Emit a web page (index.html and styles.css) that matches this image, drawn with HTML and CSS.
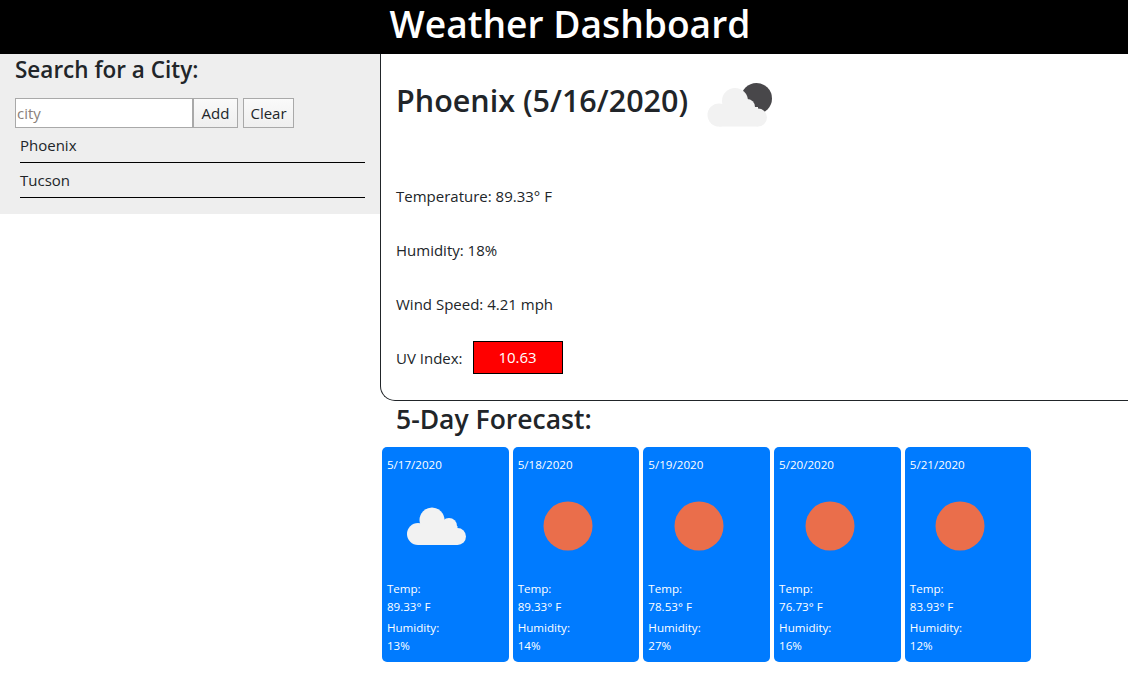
FILE: index.html
```html
<!DOCTYPE html>
<html lang="en">
<head>
  <meta charset="UTF-8">
  <meta name="viewport" content="width=device-width, initial-scale=1.0">
  <title>Weather Dashboard</title>
  <link rel="stylesheet" href="styles.css">
</head>
<body>
  <header class="page-header">
    <h1>Weather Dashboard</h1>
  </header>

  <div class="layout">
    <aside class="sidebar">
      <h4>Search for a City:</h4>
      <div class="search-row">
        <input type="text" class="city-input" placeholder="city">
        <button class="btn">Add</button>
        <button class="btn btn-clear">Clear</button>
      </div>
      <ul class="city-list">
        <li>Phoenix</li>
        <li>Tucson</li>
      </ul>
    </aside>

    <main class="content">
      <section class="current">
        <div class="current-title">
          <h2>Phoenix (5/16/2020)</h2>
          <svg class="icon-large" viewBox="0 0 100 100">
            <circle cx="66.500" cy="47.500" r="15.500" fill="#48474a"/>
            <g fill="#f2f2f2">
              <circle cx="29" cy="64" r="11.500"/>
              <circle cx="45" cy="50" r="13"/>
              <circle cx="57" cy="56" r="8"/>
              <circle cx="68" cy="66.500" r="9"/>
              <rect x="29" y="56" width="39" height="19.500"/>
            </g>
          </svg>
        </div>
        <p>Temperature: 89.33° F</p>
        <p>Humidity: 18%</p>
        <p>Wind Speed: 4.21 mph</p>
        <p class="uv-row">UV Index: <span class="uv-badge">10.63</span></p>
      </section>

      <h3>5-Day Forecast:</h3>
      <div class="forecast">
        <article class="card">
          <div class="card-date">5/17/2020</div>
          <svg class="icon-small" viewBox="0 0 100 100">
            <g fill="#f2f2f2">
              <circle cx="31" cy="58" r="11"/>
              <circle cx="45" cy="44" r="12.500"/>
              <circle cx="62" cy="50" r="8"/>
              <circle cx="70.500" cy="60.500" r="8.500"/>
              <rect x="31" y="50" width="39.500" height="19"/>
            </g>
          </svg>
          <p>Temp:<br>89.33° F</p>
          <p>Humidity:<br>13%</p>
        </article>
        <article class="card">
          <div class="card-date">5/18/2020</div>
          <svg class="icon-small" viewBox="0 0 100 100"><circle cx="50" cy="50" r="24.500" fill="#ea6e4b"/></svg>
          <p>Temp:<br>89.33° F</p>
          <p>Humidity:<br>14%</p>
        </article>
        <article class="card">
          <div class="card-date">5/19/2020</div>
          <svg class="icon-small" viewBox="0 0 100 100"><circle cx="50" cy="50" r="24.500" fill="#ea6e4b"/></svg>
          <p>Temp:<br>78.53° F</p>
          <p>Humidity:<br>27%</p>
        </article>
        <article class="card">
          <div class="card-date">5/20/2020</div>
          <svg class="icon-small" viewBox="0 0 100 100"><circle cx="50" cy="50" r="24.500" fill="#ea6e4b"/></svg>
          <p>Temp:<br>76.73° F</p>
          <p>Humidity:<br>16%</p>
        </article>
        <article class="card">
          <div class="card-date">5/21/2020</div>
          <svg class="icon-small" viewBox="0 0 100 100"><circle cx="50" cy="50" r="24.500" fill="#ea6e4b"/></svg>
          <p>Temp:<br>83.93° F</p>
          <p>Humidity:<br>12%</p>
        </article>
      </div>
    </main>
  </div>
</body>
</html>
```

FILE: styles.css
```css
* {
  box-sizing: border-box;
}
body {
  margin: 0;
  font-family: "Open Sans", "Noto Sans", sans-serif;
  font-size: 15px;
  line-height: 24px;
  color: #212529;
  background: #fff;
}
h1, h2, h3, h4, p, ul {
  margin: 0;
  padding: 0;
}
.page-header {
  height: 54px;
  background: #000;
  color: #fff;
  text-align: center;
  padding-left: 12px;
}
.page-header h1 {
  font-size: 37.200px;
  font-weight: 600;
  line-height: 48px;
}
.layout {
  display: flex;
  align-items: flex-start;
}
.sidebar {
  width: 380px;
  height: 160px;
  flex-shrink: 0;
  background: #eee;
  padding: 0 15px;
}
.sidebar h4 {
  font-size: 22.500px;
  font-weight: 600;
  line-height: 32px;
  margin-bottom: 12px;
}
.search-row {
  display: flex;
  height: 30px;
}
.city-input {
  width: 178px;
  height: 30px;
  border: 1px solid #a9a9a9;
  padding: 0 1px;
  font: inherit;
  font-size: 15px;
  background: #fff;
}
.city-input::placeholder {
  color: #8a7f7a;
}
.btn {
  height: 30px;
  width: 45px;
  padding: 0;
  font: inherit;
  font-size: 15px;
  color: #212529;
  background: linear-gradient(#fafafa, #efefef);
  border: 1px solid #a9a9a9;
}
.btn-clear {
  width: 51px;
  margin-left: 5px;
}
.city-list {
  list-style: none;
  margin: 0 0 0 5px;
  width: 345px;
}
.city-list li {
  height: 35px;
  padding-top: 5px;
  border-bottom: 1px solid #000;
}
.content {
  flex: 1;
}
.current {
  height: 347px;
  border-left: 1px solid #212529;
  border-bottom: 1px solid #212529;
  border-bottom-left-radius: 15px;
  padding: 0 15px;
}
.current-title {
  display: flex;
  align-items: center;
  height: 94px;
  margin-bottom: 36px;
}
.current-title h2 {
  font-size: 30.500px;
  font-weight: 600;
  line-height: 40px;
  margin: -2px 2px 0 0;
}
.icon-large {
  width: 100px;
  height: 100px;
  flex-shrink: 0;
}
.current p {
  margin-bottom: 30px;
}
.current .uv-row {
  display: flex;
  align-items: center;
  margin: -5px 0 0;
}
.uv-badge {
  width: 90px;
  height: 33px;
  margin-left: 10px;
  line-height: 31px;
  text-align: center;
  color: #fff;
  background: #f00;
  border: 1px solid #000;
}
.content h3 {
  font-size: 26.500px;
  font-weight: 600;
  line-height: 36px;
  margin: 0 0 10px 16px;
}
.forecast {
  display: flex;
  gap: 4.100px;
  margin-left: 1.900px;
}
.card {
  width: 126.650px;
  height: 215px;
  padding: 9px 5px;
  background: #007bff;
  color: #fff;
  border-radius: 5px;
  font-size: 11.600px;
  line-height: 18px;
}
.icon-small {
  display: block;
  width: 100px;
  height: 100px;
  margin: 2px 0 4px 0.500px;
}
.card p {
  margin-bottom: 3px;
}
```
